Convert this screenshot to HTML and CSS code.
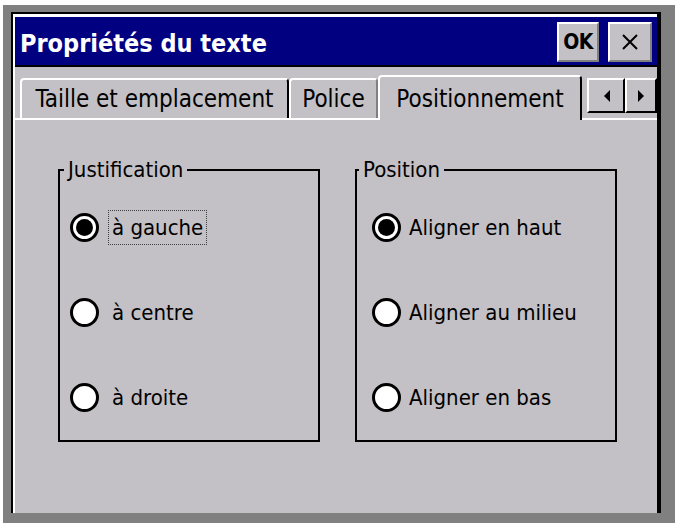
FILE: index.html
```html
<!DOCTYPE html>
<html lang="fr">
<head>
<meta charset="utf-8">
<title>Propriétés du texte</title>
<link rel="stylesheet" href="styles.css">
</head>
<body>
<div class="frame">
  <div class="dialog">
    <div class="dialog-inner">
      <header class="titlebar">
        <h1 class="title">Propriétés du texte</h1>
        <button class="cap-btn cap-ok">OK</button>
        <button class="cap-btn cap-close" aria-label="Fermer">
          <svg width="16" height="16" viewBox="0 0 16 16"><path d="M1 1 L15 15 M15 1 L1 15" stroke="#000" stroke-width="2" fill="none"/></svg>
        </button>
      </header>
      <div class="tabstrip">
        <div class="tab tab-size">Taille et emplacement</div>
        <div class="tab tab-font tab--before-active">Police</div>
        <div class="tab tab-pos tab--active">Positionnement</div>
        <div class="tab-scroll">
          <button class="scroll-btn scroll-left" aria-label="Précédent">
            <svg width="7" height="12" viewBox="0 0 7 12"><polygon points="7,0 7,12 1,6" fill="#000"/></svg>
          </button>
          <button class="scroll-btn scroll-right" aria-label="Suivant">
            <svg width="7" height="12" viewBox="0 0 7 12"><polygon points="0,0 0,12 6,6" fill="#000"/></svg>
          </button>
        </div>
      </div>
      <div class="panel">
        <fieldset class="group group--just">
          <legend>Justification</legend>
          <div class="option">
            <svg class="radio" width="29" height="29" viewBox="0 0 29 29"><circle cx="14.5" cy="14.5" r="13" fill="#fff" stroke="#000" stroke-width="3"/><circle cx="14.5" cy="14.5" r="8.5" fill="#000"/></svg>
            <span class="label label--focus">à gauche</span>
          </div>
          <div class="option">
            <svg class="radio" width="29" height="29" viewBox="0 0 29 29"><circle cx="14.5" cy="14.5" r="13" fill="#fff" stroke="#000" stroke-width="3"/></svg>
            <span class="label">à centre</span>
          </div>
          <div class="option">
            <svg class="radio" width="29" height="29" viewBox="0 0 29 29"><circle cx="14.5" cy="14.5" r="13" fill="#fff" stroke="#000" stroke-width="3"/></svg>
            <span class="label">à droite</span>
          </div>
        </fieldset>
        <fieldset class="group group--pos">
          <legend>Position</legend>
          <div class="option">
            <svg class="radio" width="29" height="29" viewBox="0 0 29 29"><circle cx="14.5" cy="14.5" r="13" fill="#fff" stroke="#000" stroke-width="3"/><circle cx="14.5" cy="14.5" r="8.5" fill="#000"/></svg>
            <span class="label">Aligner en haut</span>
          </div>
          <div class="option">
            <svg class="radio" width="29" height="29" viewBox="0 0 29 29"><circle cx="14.5" cy="14.5" r="13" fill="#fff" stroke="#000" stroke-width="3"/></svg>
            <span class="label">Aligner au milieu</span>
          </div>
          <div class="option">
            <svg class="radio" width="29" height="29" viewBox="0 0 29 29"><circle cx="14.5" cy="14.5" r="13" fill="#fff" stroke="#000" stroke-width="3"/></svg>
            <span class="label">Aligner en bas</span>
          </div>
        </fieldset>
      </div>
    </div>
  </div>
</div>
</body>
</html>
```
FILE: styles.css
```css
html, body {
  margin: 0;
  padding: 0;
  background: #fff;
}

body {
  font-family: "DejaVu Sans Condensed", "DejaVu Sans", sans-serif;
  font-stretch: condensed;
  color: #000;
}

.frame {
  margin: 5px 0 0 3px;
  width: 672px;
  height: 518px;
  box-sizing: border-box;
  padding: 7px 14px 10px 8px;
  background: #808080;
  overflow: hidden;
}

.dialog {
  width: 650px;
  height: 501px;
  box-sizing: border-box;
  border-top: 2px solid #000;
  border-left: 2px solid #000;
  border-right: 4px solid #000;
  background: #c3c1c5;
  display: flex;
}

.dialog-inner {
  flex: 1;
  min-width: 0;
  border-top: 3px solid #fff;
  border-left: 2px solid #fff;
  display: flex;
  flex-direction: column;
}

/* Title bar */
.titlebar {
  height: 50px;
  box-sizing: border-box;
  background: #000080;
  border-bottom: 2px solid #000;
  display: flex;
  align-items: flex-start;
  gap: 9px;
  padding: 5px 5px 0 5px;
}

.title {
  flex: 1;
  margin: 0;
  padding-top: 2px;
  font-size: 25px;
  font-weight: bold;
  line-height: 40px;
  color: #fff;
  white-space: nowrap;
}

.cap-btn {
  height: 40px;
  margin: 0;
  padding: 0;
  box-sizing: border-box;
  background: #c3c1c5;
  border: 2px solid;
  border-color: #fff #808080 #808080 #fff;
  display: flex;
  align-items: center;
  justify-content: center;
  font: inherit;
  color: #000;
}

.cap-ok {
  width: 42px;
  font-size: 21px;
  font-weight: bold;
  letter-spacing: -0.5px;
}

.cap-close {
  width: 44px;
}

/* Tabs */
.tabstrip {
  height: 51px;
  box-sizing: border-box;
  display: flex;
  align-items: flex-end;
  padding-left: 5px;
}

.tab {
  height: 40px;
  box-sizing: border-box;
  border-top: 2px solid #fff;
  border-left: 2px solid #fff;
  border-right: 2px solid #000;
  border-radius: 4px 4px 0 0;
  background: #c3c1c5;
  font-size: 24px;
  line-height: 38px;
  text-align: center;
  white-space: nowrap;
}

.tab-size { width: 269px; }
.tab-font { width: 89px; }
.tab-pos { width: 204px; }

.tab--before-active {
  border-right-color: #808080;
}

.tab--active {
  height: 45px;
  padding: 3px 0 2px;
  margin-bottom: -2px;
  position: relative;
  z-index: 1;
}

.tab-scroll {
  display: flex;
  margin-left: 5px;
  margin-bottom: 5px;
  height: 35px;
}

.scroll-btn {
  height: 35px;
  margin: 0;
  padding: 0;
  box-sizing: border-box;
  background: #c3c1c5;
  border: 2px solid;
  border-color: #fff #000 #000 #fff;
  display: flex;
  align-items: center;
  justify-content: center;
}

.scroll-left { width: 38px; }
.scroll-right { width: 32px; }

/* Panel */
.panel {
  flex: 1;
  border-top: 2px solid #fff;
  background: #c3c1c5;
  display: flex;
  align-items: flex-start;
  gap: 35px;
  padding: 37px 0 0 43px;
}

.group {
  width: 262px;
  box-sizing: border-box;
  margin: 0;
  padding: 2px 0 0 0;
  min-width: 0;
  border: 2px solid #000;
}

.group legend {
  font-size: 22px;
  line-height: 26px;
  padding: 0 4px;
  margin-left: 4px;
}

.group--just { --pad: 10px; --gap: 9px; }
.group--pos { --pad: 15px; --gap: 4px; }
.group--pos legend { margin-left: 2px; }

.option {
  height: 85px;
  display: flex;
  align-items: center;
  gap: var(--gap);
  padding-left: var(--pad);
}

.radio {
  flex: none;
  display: block;
}

.label {
  font-size: 22px;
  line-height: 29px;
  padding: 2px 3px;
  border: 1px dotted transparent;
  white-space: nowrap;
}

.label--focus {
  border-color: #404040;
}
```
